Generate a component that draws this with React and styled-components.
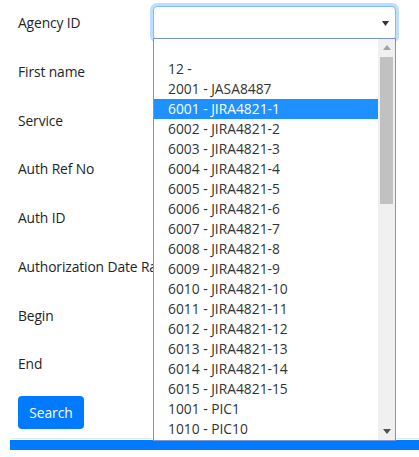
import React from "react";
import styled, { createGlobalStyle } from "styled-components";

const Global = createGlobalStyle`
  html, body { margin: 0; padding: 0; background: #fff; }
  body { font-family: "Open Sans", "Noto Sans", sans-serif; color: #212529; }
`;

const Page = styled.div`
  width: 419px;
  height: 457px;
  overflow: hidden;
  position: relative;
`;

const Form = styled.form`
  padding: 6px 0 0 18px;
  display: flex;
  flex-direction: column;
  gap: 14.75px;
`;

const Row = styled.div`
  display: grid;
  grid-template-columns: 135px 243px;
  align-items: center;
  height: 34px;
  position: relative;
`;

const Label = styled.label`
  font-size: 13.8px;
  line-height: 20px;
  color: #212529;
  white-space: nowrap;
  letter-spacing: -0.1px;
`;

const SelectBox = styled.div`
  box-sizing: border-box;
  height: 34px;
  border: 1px solid #80bdff;
  border-radius: 4px;
  box-shadow: 0 0 0 3px rgba(0, 123, 255, 0.25);
  background: #fff;
  display: flex;
  align-items: center;
  justify-content: flex-end;
  padding-right: 6px;
`;

const Caret = styled.svg`
  width: 7px;
  height: 5px;
  display: block;
`;

const Button = styled.button`
  align-self: flex-start;
  width: 66px;
  height: 33px;
  border: none;
  border-radius: 4px;
  background: #007bff;
  color: #fff;
  font-family: "Open Sans", "Noto Sans", sans-serif;
  font-size: 13.8px;
  padding: 0;
  margin-top: 0;
`;

const Footer = styled.div`
  margin: 9px 0 0 10px;
  border-top: 1px solid #e9ecef;
  padding-top: 1px;
`;

const BlueBar = styled.div`
  height: 10px;
  background: #007bff;
`;

const Dropdown = styled.div`
  position: absolute;
  left: 153px;
  top: 38px;
  width: 243px;
  height: 403px;
  box-sizing: border-box;
  border: 1px solid #7a94d0;
  background: #fff;
  display: flex;
  z-index: 5;
`;

const Options = styled.ul`
  list-style: none;
  margin: 0;
  padding: 0;
  flex: 1;
  overflow: hidden;
`;

const Option = styled.li`
  height: 20px;
  line-height: 20px;
  padding-left: 14px;
  font-size: 13.8px;
  color: ${(p) => (p.$active ? "#fff" : "#333")};
  background: ${(p) => (p.$active ? "#1e90ff" : "transparent")};
  white-space: nowrap;
`;

const Scrollbar = styled.div`
  width: 17px;
  background: #f0f0f0;
  display: flex;
  flex-direction: column;
`;

const ArrowBtn = styled.div`
  height: 17px;
  display: flex;
  align-items: center;
  justify-content: center;
`;

const Thumb = styled.div`
  margin: 1px 2px 0 2px;
  height: 147px;
  background: #c1c1c1;
`;

const Spacer = styled.div`
  flex: 1;
`;

const items = [
  "",
  "12 -",
  "2001 - JASA8487",
  ...Array.from({ length: 15 }, (_, i) => `${6001 + i} - JIRA4821-${i + 1}`),
  "1001 - PIC1",
  "1010 - PIC10",
];

const labels = [
  "Agency ID",
  "First name",
  "Service",
  "Auth Ref No",
  "Auth ID",
  "Authorization Date Range",
  "Begin",
  "End",
];

export default function App() {
  return (
    <>
      <Global />
      <Page>
        <Form onSubmit={(e) => e.preventDefault()}>
          {labels.map((l, i) => (
            <Row key={l}>
              <Label>{l}</Label>
              {i === 0 && (
                <SelectBox>
                  <Caret viewBox="0 0 7 5">
                    <path d="M0 0 H7 L3.5 5 Z" fill="#333" />
                  </Caret>
                </SelectBox>
              )}
            </Row>
          ))}
          <Button type="submit">Search</Button>
        </Form>
        <Footer>
          <BlueBar />
        </Footer>
        <Dropdown>
          <Options>
            {items.map((t, i) => (
              <Option key={i} $active={i === 3}>
                {t || "\u00a0"}
              </Option>
            ))}
          </Options>
          <Scrollbar>
            <ArrowBtn>
              <svg width="8" height="5" viewBox="0 0 8 5">
                <path d="M0 5 L4 0 L8 5 Z" fill="#a3a3a3" />
              </svg>
            </ArrowBtn>
            <Thumb />
            <Spacer />
            <ArrowBtn>
              <svg width="8" height="5" viewBox="0 0 8 5">
                <path d="M0 0 L8 0 L4 5 Z" fill="#505050" />
              </svg>
            </ArrowBtn>
          </Scrollbar>
        </Dropdown>
      </Page>
    </>
  );
}
